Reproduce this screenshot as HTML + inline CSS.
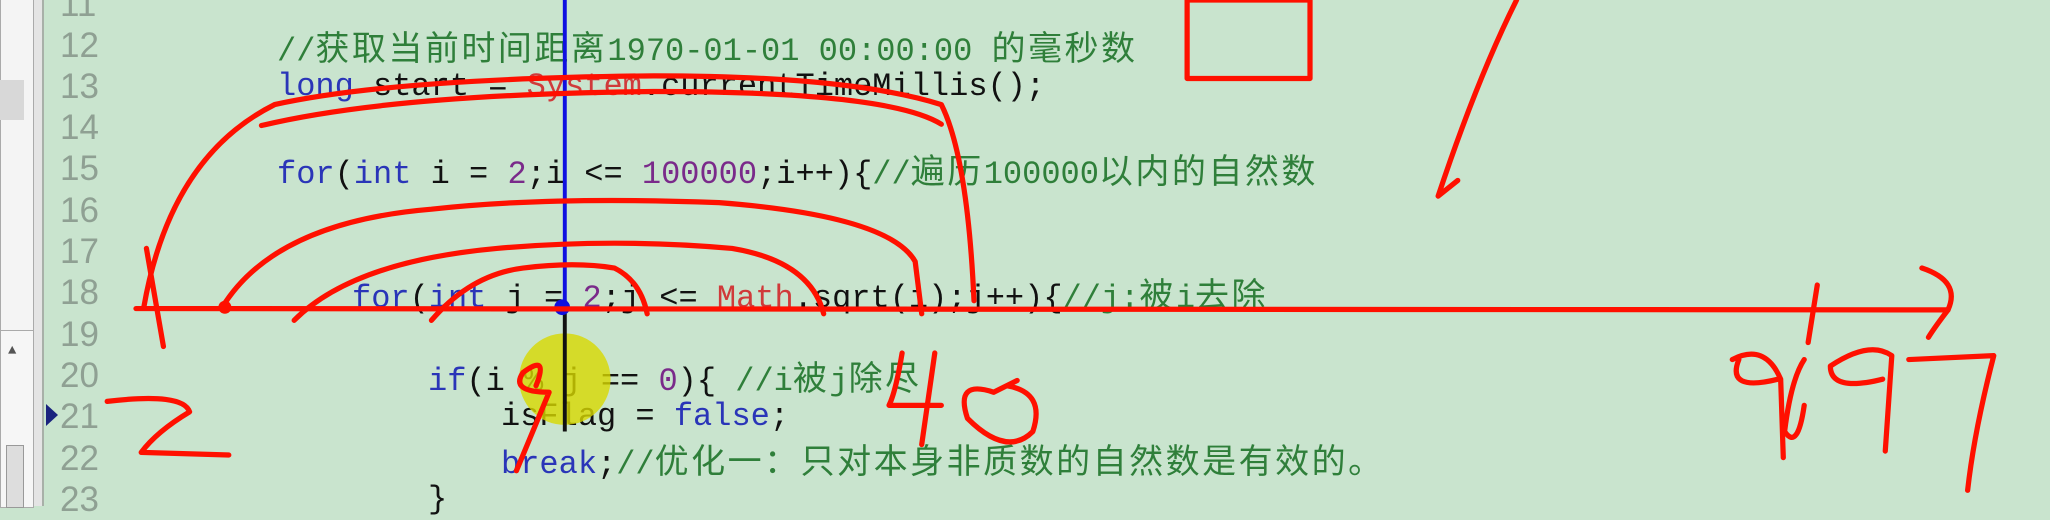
<!DOCTYPE html>
<html><head><meta charset="utf-8"><style>
body{margin:0;width:2050px;height:506px;overflow:hidden;background:#c9e4ce;position:relative;font-family:"Liberation Mono","Noto Sans CJK SC",monospace}
.l{position:absolute;left:0;width:2050px;height:40px;line-height:40px;font-size:32px;white-space:pre;color:#111}
.n{position:absolute;left:60px;width:70px;text-align:left;color:#8fa093;font-family:"Liberation Sans",sans-serif;font-size:35px}
.c{position:absolute}
.z{font-family:"Noto Sans CJK SC",sans-serif;font-size:34px;letter-spacing:2.5px}
.k{color:#2a35b8}.s{color:#d03a3a}.g{color:#2f7f3a}.p{color:#7a2a8a}
#side{position:absolute;left:0;top:0;width:42px;height:506px;background:#e4e4e4;border-right:2px solid #a8b0a8}
</style></head><body>
<div id="side">
<div style="position:absolute;left:0;top:0;width:32px;height:430px;background:#f4f4f4;border:1px solid #aaa;border-top:none"></div>
<div style="position:absolute;left:0;top:80px;width:24px;height:40px;background:#d8d8d8"></div>
<div style="position:absolute;left:0;top:330px;width:32px;height:176px;background:#f6f6f6;border:1px solid #aaa"></div>
<div style="position:absolute;left:6px;top:445px;width:16px;height:61px;background:#ddd;border:1px solid #999"></div>
<div style="position:absolute;left:8px;top:343px;font-size:14px;color:#555">▲</div>
</div>
<div style="position:absolute;left:46px;top:404px;width:0;height:0;border-top:11px solid transparent;border-bottom:11px solid transparent;border-left:12px solid #1a237e"></div>

<div class="l" style="top:-15px"><span class="n">11</span></div>
<div class="l" style="top:26px"><span class="n">12</span><span class="c g" style="left:277px">//<span class="z">获取当前时间距离</span>1970-01-01 00:00:00 <span class="z">的毫秒数</span></span></div>
<div class="l" style="top:67px"><span class="n">13</span><span class="c" style="left:277px"><span class="k">long</span> start = <span class="s">System</span>.currentTimeMillis();</span></div>
<div class="l" style="top:108px"><span class="n">14</span></div>
<div class="l" style="top:149px"><span class="n">15</span><span class="c" style="left:277px"><span class="k">for</span>(<span class="k">int</span> i = <span class="p">2</span>;i &lt;= <span class="p">100000</span>;i++){<span class="g">//<span class="z">遍历</span>100000<span class="z">以内的自然数</span></span></span></div>
<div class="l" style="top:191px"><span class="n">16</span></div>
<div class="l" style="top:232px"><span class="n">17</span></div>
<div class="l" style="top:273px"><span class="n">18</span><span class="c" style="left:352px"><span class="k">for</span>(<span class="k">int</span> j = <span class="p">2</span>;j &lt;= <span class="s">Math</span>.sqrt(i);j++){<span class="g">//j:<span class="z">被</span>i<span class="z">去除</span></span></span></div>
<div class="l" style="top:315px"><span class="n">19</span></div>
<div class="l" style="top:356px"><span class="n">20</span><span class="c" style="left:428px"><span class="k">if</span>(i % j == <span class="p">0</span>){ <span class="g">//i<span class="z">被</span>j<span class="z">除尽</span></span></span></div>
<div class="l" style="top:397px"><span class="n">21</span><span class="c" style="left:501px">isFlag = <span class="k">false</span>;</span></div>
<div class="l" style="top:439px"><span class="n">22</span><span class="c" style="left:501px"><span class="k">break</span>;<span class="g">//<span class="z">优化一：只对本身非质数的自然数是有效的。</span></span></span></div>
<div class="l" style="top:480px"><span class="n">23</span><span class="c" style="left:428px">}</span></div>

<svg style="position:absolute;left:0;top:0" width="2050" height="506" viewBox="0 0 1568 387" preserveAspectRatio="none">
<circle cx="432" cy="290" r="35" fill="#d8d800" opacity="0.8"/>
<line x1="432" y1="0" x2="432" y2="236" stroke="#1010e0" stroke-width="3"/>
<line x1="432" y1="236" x2="432" y2="330" stroke="#111" stroke-width="3"/>
<circle cx="430" cy="235" r="6" fill="#1010e0"/>
<g fill="none" stroke="#ff1000" stroke-width="4" stroke-linecap="round" stroke-linejoin="round">
<rect x="908" y="0" width="94" height="60"/>
<line x1="104" y1="236" x2="1490" y2="237"/>
<path d="M1470 205 Q1500 215 1490 237 Q1480 250 1475 258"/>
<path d="M1390 218 L1383 262"/>
<path d="M1160 0 Q1130 60 1100 150 L1115 138"/>
<path d="M112 190 L125 265"/>
<path d="M110 235 Q130 120 210 80 Q300 60 500 58 Q650 58 720 80 Q740 120 745 230"/>
<path d="M200 96 Q300 72 500 70 Q680 70 720 95"/>
<path d="M170 235 Q210 170 330 160 Q420 150 550 155 Q680 165 700 200 L705 240"/>
<path d="M225 245 Q270 200 380 190 Q470 182 560 190 Q620 200 630 240"/>
<path d="M330 245 Q360 210 400 205 Q440 200 470 205 Q490 215 495 240"/>
<path d="M82 307 Q140 300 145 315 Q120 330 108 346 L175 348"/>
<path d="M410 295 Q420 270 400 285 Q390 300 420 300 L395 360"/>
<path d="M690 270 Q685 300 680 310 L720 310 M715 270 L705 340"/>
<path d="M760 300 Q730 290 740 320 Q770 350 790 330 Q800 300 770 295 Q790 285 760 300"/>
<path d="M1325 275 Q1350 262 1362 290 L1364 350 M1330 275 Q1320 300 1360 290"/>
<path d="M1380 275 Q1370 290 1365 330 Q1375 345 1380 310"/>
<path d="M1400 280 Q1430 260 1447 272 L1442 345 M1400 280 Q1400 300 1440 290"/>
<path d="M1460 275 L1525 272 Q1510 330 1505 375"/>
</g>
<circle cx="172" cy="235" r="5" fill="#ff1000"/>
</svg>
</body></html>
